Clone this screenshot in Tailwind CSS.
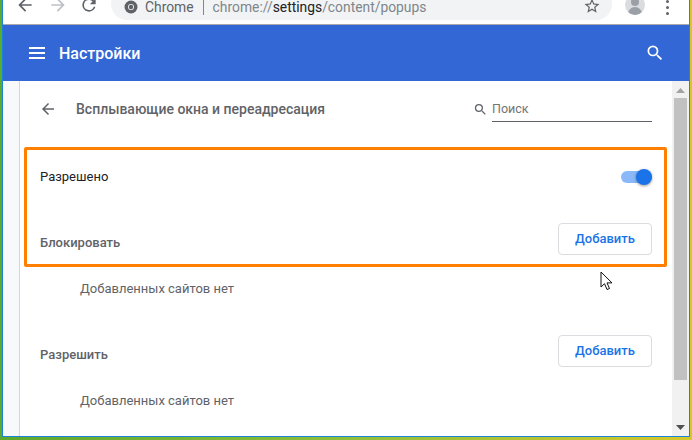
<!DOCTYPE html>
<html>
<head>
  <meta charset="utf-8">
  <title>Настройки</title>
  <script src="https://cdn.jsdelivr.net/npm/@tailwindcss/browser@4"></script>
</head>
<body class="w-[692px] h-[440px] overflow-hidden bg-gradient-to-r from-[#5da82e] via-[#8fbf3a] to-[#d4c82a] font-['Roboto','Liberation_Sans',sans-serif]">
  <div class="ml-[2px] mr-[2px] h-[437px] border-l border-r border-b border-[#1a84d8] bg-white flex flex-col">

    <!-- browser toolbar -->
    <div class="h-[25px] shrink-0 border-b border-[#a9a9a9] relative overflow-hidden">
      <svg class="absolute left-[12px] top-[-5px]" width="20" height="20" viewBox="0 0 24 24" fill="#5f6368"><path d="M20 11H7.830l5.590-5.590L12 4l-8 8 8 8 1.410-1.410L7.830 13H20z"/></svg>
      <svg class="absolute left-[45px] top-[-5px]" width="20" height="20" viewBox="0 0 24 24" fill="#bdc1c6"><path d="M4 11h12.170l-5.590-5.590L12 4l8 8-8 8-1.410-1.410L16.170 13H4z"/></svg>
      <svg class="absolute left-[76px] top-[-5px]" width="20" height="20" viewBox="0 0 24 24" fill="#5f6368"><path d="M17.650 6.350A7.960 7.960 0 0 0 12 4a8 8 0 1 0 7.730 10h-2.080A6 6 0 1 1 12 6c1.660 0 3.140.690 4.220 1.780L13 11h7V4z"/></svg>
      <div class="absolute left-[108px] top-[-12px] h-[32px] w-[501px] rounded-full bg-[#f1f3f4] flex items-center text-[13.850px] leading-[12px] pt-[6px]">
        <svg class="ml-[13px] mr-[7px]" width="14" height="14" viewBox="0 0 14 14"><circle cx="7" cy="7" r="6.500" fill="#5f6368"/><circle cx="7" cy="7" r="3" fill="#f1f3f4"/><circle cx="7" cy="7" r="2.200" fill="#5f6368"/></svg>
        <span class="text-[#5f6368]">Chrome</span>
        <span class="ml-[9px] mr-[9px] w-px h-[16px] bg-[#80868b]"></span>
        <span class="text-[#80868b]">chrome://<span class="text-[#202124]">settings</span>/content/popups</span>
        <svg class="absolute right-[11px] top-[9px]" width="18" height="18" viewBox="0 0 24 24" fill="#5f6368"><path d="M22 9.240l-7.190-.620L12 2 9.190 8.630 2 9.240l5.460 4.730L5.820 21 12 17.270 18.180 21l-1.630-7.030L22 9.240zM12 15.400l-3.760 2.270 1-4.280-3.320-2.880 4.380-.380L12 6.100l1.710 4.040 4.380.380-3.320 2.880 1 4.280L12 15.400z"/></svg>
      </div>
      <div class="absolute left-[622px] top-[-5px] w-5 h-5 rounded-full bg-[#dadce0] overflow-hidden">
        <div class="mx-auto mt-[3px] w-[8px] h-[8px] rounded-full bg-[#9aa0a6]"></div>
        <div class="mx-auto mt-[1px] w-[14px] h-[8px] rounded-t-full bg-[#9aa0a6]"></div>
      </div>
      <div class="absolute left-[663px] top-0 flex flex-col gap-[3px]">
        <span class="w-[3px] h-[3px] rounded-full bg-[#5f6368]"></span>
        <span class="w-[3px] h-[3px] rounded-full bg-[#5f6368]"></span>
        <span class="w-[3px] h-[3px] rounded-full bg-[#5f6368]"></span>
      </div>
    </div>

    <!-- settings header -->
    <div class="h-[56px] shrink-0 bg-[#3367d6] flex items-center text-white">
      <svg class="ml-[26px]" width="16" height="12" viewBox="0 0 16 12" fill="#fff"><path d="M0 0h16v2H0zM0 5h16v2H0zM0 10h16v2H0z"/></svg>
      <span class="ml-[14px] text-[16px] font-medium pt-[2px]">Настройки</span>
      <svg class="ml-auto mr-[24px]" width="20" height="20" viewBox="0 0 24 24" fill="#fff"><path d="M15.500 14h-.790l-.280-.270A6.470 6.470 0 0 0 16 9.500 6.500 6.500 0 1 0 9.500 16c1.610 0 3.090-.590 4.230-1.570l.270.280v.790l5 4.990L20.490 19l-4.990-5zm-6 0C7.010 14 5 11.990 5 9.500S7.010 5 9.500 5 14 7.010 14 9.500 11.990 14 9.500 14z"/></svg>
    </div>

    <!-- body -->
    <div class="flex-1 flex min-h-0">
      <div class="w-[17px] shrink-0 bg-[#f8f9fa] border-r border-[#d6d6d6]"></div>

      <div class="flex-1 min-w-0 overflow-hidden bg-white text-[13px]">
        <div class="h-[56px] flex items-center pl-[19px] pr-[20px]">
          <svg width="18" height="18" viewBox="0 0 24 24" fill="#5f6368"><path d="M20 11H7.830l5.590-5.590L12 4l-8 8 8 8 1.410-1.410L7.830 13H20z"/></svg>
          <span class="ml-[19px] text-[14px] font-medium text-[#5f6368] pt-[1px]">Всплывающие окна и переадресация</span>
          <svg class="ml-auto" width="15" height="15" viewBox="0 0 24 24" fill="#5f6368"><path d="M15.500 14h-.790l-.280-.270A6.470 6.470 0 0 0 16 9.500 6.500 6.500 0 1 0 9.500 16c1.610 0 3.090-.590 4.230-1.570l.270.280v.790l5 4.990L20.490 19l-4.990-5zm-6 0C7.010 14 5 11.990 5 9.500S7.010 5 9.500 5 14 7.010 14 9.500 11.990 14 9.500 14z"/></svg>
          <div class="ml-[4px] w-[160px] h-[26px] border-b border-[#5f6368] flex items-center text-[#757575] text-[12.500px] pt-[2px]">Поиск</div>
        </div>

        <!-- highlighted block -->
        <div class="ml-[4px] w-[643px] h-[120px] border-[3px] border-[#ff8000] rounded-[2px] pl-[13px] pr-[12px] mt-[10px]">
          <div class="h-[54px] flex items-center justify-between">
            <span class="text-[#202124]">Разрешено</span>
            <div class="relative w-[31px] h-[16px] flex items-center">
              <div class="w-full h-[12px] rounded-full bg-[#8ab8f8]"></div>
              <div class="absolute right-0 top-0 w-[16px] h-[16px] rounded-full bg-[#1a73e8] shadow-[0_1px_3px_rgba(0,0,0,0.4)]"></div>
            </div>
          </div>
          <div class="h-[60px] flex items-end justify-between pb-[9px]">
            <span class="text-[#5f6368] font-medium pb-[3px]">Блокировать</span>
            <button class="w-[94px] h-[32px] rounded-[4px] border border-[#dadce0] bg-white text-[#1a73e8] font-medium">Добавить</button>
          </div>
        </div>

        <div class="pl-[60px] text-[#5f6368] h-[44px] flex items-center">Добавленных сайтов нет</div>

        <div class="pl-[20px] pr-[20px] h-[32px] mt-[24px] flex items-start justify-between">
          <span class="text-[#5f6368] font-medium mt-[10px]">Разрешить</span>
          <button class="w-[94px] h-[32px] rounded-[4px] border border-[#dadce0] bg-white text-[#1a73e8] font-medium">Добавить</button>
        </div>
        <div class="pl-[60px] mt-[22px] text-[#5f6368] h-[24px] flex items-center">Добавленных сайтов нет</div>
      </div>

      <!-- scrollbar -->
      <div class="w-[17px] shrink-0 bg-[#f1f1f1] flex flex-col items-center">
        <svg class="mt-[7px]" width="9" height="5" viewBox="0 0 9 5" fill="#a3a3a3"><path d="M4.500 0L9 5H0z"/></svg>
        <div class="mt-[5px] w-[13px] h-[282px] bg-[#c1c1c1]"></div>
        <svg class="mt-auto mb-[6px]" width="9" height="5" viewBox="0 0 9 5" fill="#505050"><path d="M0 0h9L4.500 5z"/></svg>
      </div>
    </div>
  </div>

  <!-- mouse pointer -->
  <svg class="absolute left-[600px] top-[271px]" width="14" height="20" viewBox="0 0 14 20"><path d="M1 1v15l3.500-3.300 2.500 5.800 2.500-1-2.500-5.600h5z" fill="#fff" stroke="#111" stroke-width="1"/></svg>
</body>
</html>
